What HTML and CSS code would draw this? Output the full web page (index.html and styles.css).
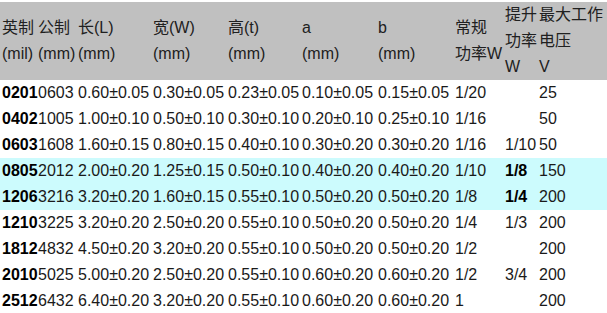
FILE: index.html
```html
<!DOCTYPE html>
<html lang="zh">
<head>
<meta charset="utf-8">
<title>贴片电阻尺寸</title>
<link rel="stylesheet" href="styles.css">
</head>
<body>
<table class="spec">
  <colgroup>
    <col class="c1"><col class="c2"><col class="c3"><col class="c4"><col class="c5">
    <col class="c6"><col class="c7"><col class="c8"><col class="c9"><col class="c10">
  </colgroup>
  <thead>
    <tr class="head">
      <th class="first">英制<br>(mil)</th>
      <th>公制<br>(mm)</th>
      <th>长(L)<br>(mm)</th>
      <th>宽(W)<br>(mm)</th>
      <th>高(t)<br>(mm)</th>
      <th>a<br>(mm)</th>
      <th>b<br>(mm)</th>
      <th>常规<br>功率W</th>
      <th>提升<br>功率<br>W</th>
      <th>最大工作<br>电压<br>V</th>
    </tr>
  </thead>
  <tbody>
    <tr><td class="code">0201</td><td>0603</td><td>0.60±0.05</td><td>0.30±0.05</td><td>0.23±0.05</td><td>0.10±0.05</td><td>0.15±0.05</td><td>1/20</td><td></td><td>25</td></tr>
    <tr><td class="code">0402</td><td>1005</td><td>1.00±0.10</td><td>0.50±0.10</td><td>0.30±0.10</td><td>0.20±0.10</td><td>0.25±0.10</td><td>1/16</td><td></td><td>50</td></tr>
    <tr><td class="code">0603</td><td>1608</td><td>1.60±0.15</td><td>0.80±0.15</td><td>0.40±0.10</td><td>0.30±0.20</td><td>0.30±0.20</td><td>1/16</td><td>1/10</td><td>50</td></tr>
    <tr class="hl"><td class="code">0805</td><td>2012</td><td>2.00±0.20</td><td>1.25±0.15</td><td>0.50±0.10</td><td>0.40±0.20</td><td>0.40±0.20</td><td>1/10</td><td class="b">1/8</td><td>150</td></tr>
    <tr class="hl"><td class="code">1206</td><td>3216</td><td>3.20±0.20</td><td>1.60±0.15</td><td>0.55±0.10</td><td>0.50±0.20</td><td>0.50±0.20</td><td>1/8</td><td class="b">1/4</td><td>200</td></tr>
    <tr><td class="code">1210</td><td>3225</td><td>3.20±0.20</td><td>2.50±0.20</td><td>0.55±0.10</td><td>0.50±0.20</td><td>0.50±0.20</td><td>1/4</td><td>1/3</td><td>200</td></tr>
    <tr><td class="code">1812</td><td>4832</td><td>4.50±0.20</td><td>3.20±0.20</td><td>0.55±0.10</td><td>0.50±0.20</td><td>0.50±0.20</td><td>1/2</td><td></td><td>200</td></tr>
    <tr><td class="code">2010</td><td>5025</td><td>5.00±0.20</td><td>2.50±0.20</td><td>0.55±0.10</td><td>0.60±0.20</td><td>0.60±0.20</td><td>1/2</td><td>3/4</td><td>200</td></tr>
    <tr><td class="code">2512</td><td>6432</td><td>6.40±0.20</td><td>3.20±0.20</td><td>0.55±0.10</td><td>0.60±0.20</td><td>0.60±0.20</td><td>1</td><td></td><td>200</td></tr>
  </tbody>
</table>
</body>
</html>
```
FILE: styles.css
```css
html, body {
  margin: 0;
  padding: 0;
  background: #ffffff;
}
body {
  padding-top: 2px;
  font-family: "Liberation Sans", Arial, "Noto Sans CJK SC", sans-serif;
  font-size: 16px;
  color: #1a1a1a;
}
.spec {
  width: 607px;
  table-layout: fixed;
  border-collapse: collapse;
  border-spacing: 0;
}
.c1 { width: 38px; }
.c2 { width: 40px; }
.c3 { width: 75px; }
.c4 { width: 75px; }
.c5 { width: 74px; }
.c6 { width: 76px; }
.c7 { width: 77px; }
.c8 { width: 50px; }
.c9 { width: 34px; }
.c10 { width: 68px; }
.spec th,
.spec td {
  padding: 0;
  text-align: left;
  white-space: nowrap;
  overflow: visible;
}
.head th {
  background: #c0c0c0;
  height: 78px;
  line-height: 26px;
  font-weight: normal;
  vertical-align: middle;
  color: #202020;
}
.spec th.first,
.spec td.code {
  padding-left: 2px;
}
.spec tbody td {
  height: 26px;
  line-height: 26px;
  vertical-align: middle;
}
.spec td.code {
  font-weight: bold;
  color: #000;
}
.spec td.b {
  font-weight: bold;
  color: #000;
}
.hl td {
  background: #ccfbfd;
}
```
